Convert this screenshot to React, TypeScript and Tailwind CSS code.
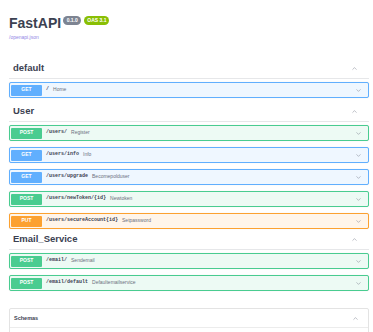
import { ChevronDown, ChevronUp } from "lucide-react";

type Method = "GET" | "POST" | "PUT";

const methodStyles: Record<Method, { row: string; badge: string }> = {
  GET: { row: "bg-[#eff7ff] border-[#61affe]", badge: "bg-[#61affe]" },
  POST: { row: "bg-[#edfaf4] border-[#49cc90]", badge: "bg-[#49cc90]" },
  PUT: { row: "bg-[#fff5ea] border-[#fca130]", badge: "bg-[#fca130]" },
};

const sections: { tag: string; gap: string; ops: { method: Method; path: string; summary: string }[] }[] = [
  { tag: "default", gap: "mt-0", ops: [{ method: "GET", path: "/", summary: "Home" }] },
  {
    tag: "User",
    gap: "mt-[5px]",
    ops: [
      { method: "POST", path: "/users/", summary: "Register" },
      { method: "GET", path: "/users/info", summary: "Info" },
      { method: "GET", path: "/users/upgrade", summary: "Becomepolduser" },
      { method: "POST", path: "/users/newToken/{id}", summary: "Newtoken" },
      { method: "PUT", path: "/users/secureAccount{id}", summary: "Setpassword" },
    ],
  },
  {
    tag: "Email_Service",
    gap: "mt-[2px]",
    ops: [
      { method: "POST", path: "/email/", summary: "Sendemail" },
      { method: "POST", path: "/email/default", summary: "Defaultemailservice" },
    ],
  },
];

function OpRow({ method, path, summary }: { method: Method; path: string; summary: string }) {
  const s = methodStyles[method];
  return (
    <div className={`flex items-center h-[16px] border rounded-[2px] pl-[1px] pr-[6px] shadow-[0_0_1px_rgba(0,0,0,0.15)] ${s.row}`}>
      <div className={`w-[31px] h-[11px] rounded-[1px] flex items-center justify-center text-white text-[5px] font-bold ${s.badge}`}>
        {method}
      </div>
      <span className="ml-[4px] font-['Liberation_Mono',monospace] text-[5px] font-bold text-[#3b4151]">{path}</span>
      <span className="ml-[4px] text-[5px] text-[#6b7080]">{summary}</span>
      <ChevronDown className="ml-auto w-[7px] h-[7px] text-[#6b7080]" strokeWidth={1.5} />
    </div>
  );
}

export default function App() {
  return (
    <div className="w-[373px] h-[332px] overflow-hidden bg-white font-['Liberation_Sans',Arial,sans-serif]">
      <div className="pl-[9px] pr-[4px] pt-[15px]">
        <div className="flex items-start">
          <h1 className="text-[14px] leading-[16px] font-bold text-[#3b4151]">FastAPI</h1>
          <span className="ml-[2px] mt-[1px] h-[9px] px-[3.5px] rounded-full bg-[#7d8492] text-white text-[5px] font-bold flex items-center">0.1.0</span>
          <span className="ml-[3px] mt-[1px] h-[9px] px-[3px] rounded-full bg-[#89bf04] text-white text-[5px] font-bold flex items-center">OAS 3.1</span>
        </div>
        <div className="mt-[3px] text-[5px] leading-[6px] text-[#9387e6]">/openapi.json</div>

        <div className="mt-[20px] flex flex-col">
          {sections.map((sec) => (
            <div key={sec.tag} className={sec.gap}>
              <div className="h-[19px] pb-[1px] pl-[4px] pr-[11px] flex items-center justify-between border-b border-[#e6e7e9]">
                <span className="text-[9.5px] font-bold text-[#3b4151]">{sec.tag}</span>
                <ChevronUp className="w-[7px] h-[7px] text-[#6b7080]" strokeWidth={1.5} />
              </div>
              <div className="mt-[3px] flex flex-col gap-[6px]">
                {sec.ops.map((op) => (
                  <OpRow key={op.path} {...op} />
                ))}
              </div>
            </div>
          ))}
        </div>

        <div className="mt-[17px] border border-[#e3e3e3] rounded-[2px]">
          <div className="h-[19px] pl-[4px] pr-[9px] flex items-center justify-between border-b border-[#ececec]">
            <span className="text-[5.5px] font-bold text-[#3b4151]">Schemas</span>
            <ChevronUp className="w-[7px] h-[7px] text-[#6b7080]" strokeWidth={1.5} />
          </div>
          <div className="h-[20px]" />
        </div>
      </div>
    </div>
  );
}
